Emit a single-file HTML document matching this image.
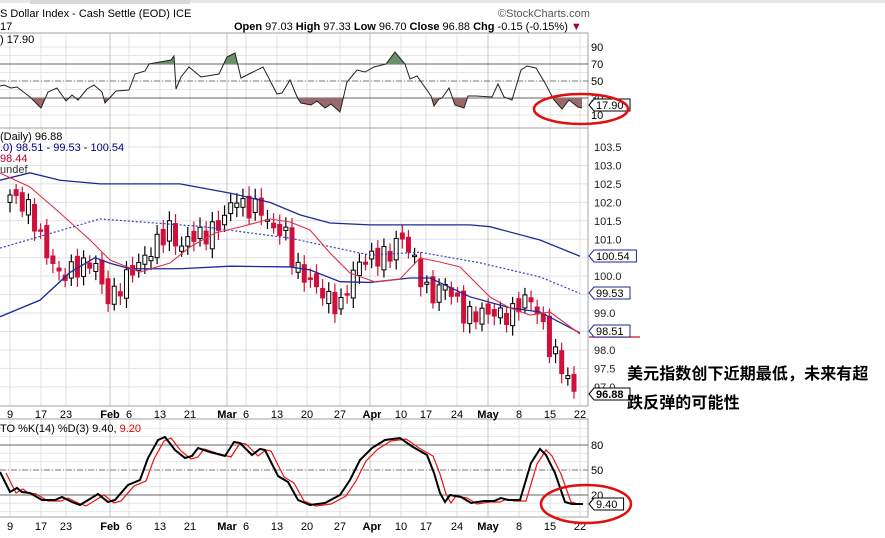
<!DOCTYPE html>
<html><head><meta charset="utf-8"><style>
body{margin:0;background:#fff;width:885px;height:538px;overflow:hidden;font-family:"Liberation Sans",sans-serif}
svg text{font-family:"Liberation Sans",sans-serif;font-size:11px}
.cn{position:absolute;left:627px;font:bold 16px "Liberation Sans","Noto Sans CJK SC",sans-serif;color:#000;letter-spacing:0.1px}
</style></head><body>
<svg id="s" width="885" height="538" xmlns="http://www.w3.org/2000/svg" style="position:absolute;left:0;top:0">
<rect x="0" y="0" width="885" height="3" fill="#e8e8e8"/>
<rect x="30" y="0" width="160" height="4" fill="#d8d8d8"/>
<g id="grid"></g>
<text x="0" y="17" font-size="12">S Dollar Index - Cash Settle (EOD) ICE</text>
<text x="498" y="17" fill="#555" font-size="12">©StockCharts.com</text>
<text x="0" y="30" font-size="11">17</text>
<text x="234" y="30" font-size="11"><tspan font-weight="bold">Open</tspan> 97.03 <tspan font-weight="bold">High</tspan> 97.33 <tspan font-weight="bold">Low</tspan> 96.70 <tspan font-weight="bold">Close</tspan> 96.88 <tspan font-weight="bold">Chg</tspan> -0.15 (-0.15%) <tspan fill="#a00040">▼</tspan></text>
<text x="0" y="43">) 17.90</text>
<text x="0" y="140">(Daily) 96.88</text>
<text x="0" y="151" fill="#000080">.0) 98.51 - 99.53 - 100.54</text>
<text x="0" y="162" fill="#c00030">98.44</text>
<text x="0" y="173" fill="#333">undef</text>
<text x="0" y="432">TO %K(14) %D(3) 9.40, <tspan fill="#e00000">9.20</tspan></text>
<g id="dyn"></g>
</svg>
<div class="cn" style="top:360px">美元指数创下近期最低，未来有超</div>
<div class="cn" style="top:389px">跌反弹的可能性</div>
<script>
var NS="http://www.w3.org/2000/svg",G=document.getElementById('grid'),D=document.getElementById('dyn');
function el(p,t,a,txt){var e=document.createElementNS(NS,t);for(var k in a)e.setAttribute(k,a[k]);if(txt!=null)e.textContent=txt;p.appendChild(e);return e}
var R=588;
var panels=[[33,128],[128,406],[419,517]];
function yp(p){return 147+(103.5-p)*36.9}
for(var p=103.5;p>=96.9;p-=0.5){var y=yp(p);if(y<128||y>406)continue;el(G,'line',{x1:0,x2:R,y1:y,y2:y,stroke:'#e2e2e2'});el(G,'text',{x:594,y:y+4,fill:'#222'},p.toFixed(1))}
for(var v=10;v<=90;v+=10){var y=64+(70-v)*0.85;el(G,'line',{x1:0,x2:R,y1:y,y2:y,stroke:'#e6e6e6'})}
for(var v=0;v<=100;v+=10){var y=445+(80-v)*0.833;if(y>419&&y<517)el(G,'line',{x1:0,x2:R,y1:y,y2:y,stroke:'#e6e6e6'})}
var minor=[10,41,66,129,160,190,246,277,307,340,401,426,457,519,550,580],major=[110,227,370,488];
minor.forEach(function(x){panels.forEach(function(pp){el(G,'line',{x1:x,x2:x,y1:pp[0],y2:pp[1],stroke:'#e0e0e0'})})});
major.forEach(function(x){panels.forEach(function(pp){el(G,'line',{x1:x,x2:x,y1:pp[0],y2:pp[1],stroke:'#c4c4c4'})})});
panels.forEach(function(pp){el(G,'rect',{x:-1,y:pp[0],width:R+1,height:pp[1]-pp[0],fill:'none',stroke:'#a0a0a0'})});
[[70,'#666',''],[50,'#777','6,2,1,2'],[30,'#666','']].forEach(function(a){var y=64+(70-a[0])*0.85;el(G,'line',{x1:0,x2:R,y1:y,y2:y,stroke:a[1],'stroke-dasharray':a[2]})});
[90,70,50,30,10].forEach(function(v){el(G,'text',{x:591,y:64+(70-v)*0.85+4},v)});
[[80,'#666',''],[50,'#777','6,2,1,2'],[20,'#666','']].forEach(function(a){var y=445+(80-a[0])*0.833;el(G,'line',{x1:0,x2:R,y1:y,y2:y,stroke:a[1],'stroke-dasharray':a[2]})});
[80,50,20].forEach(function(v){el(G,'text',{x:591,y:445+(80-v)*0.833+4},v)});
var lab=[[10,'9'],[41,'17'],[66,'23'],[110,'Feb',1],[129,'6'],[160,'13'],[190,'21'],[227,'Mar',1],[246,'6'],[277,'13'],[307,'20'],[340,'27'],[372,'Apr',1],[401,'10'],[426,'17'],[457,'24'],[488,'May',1],[519,'8'],[550,'15'],[580,'22']];
[414,526].forEach(function(y){lab.forEach(function(l){el(G,'text',{x:l[0],y:y+4,'text-anchor':'middle','font-weight':l[2]?'bold':'normal','font-size':'12'},l[1])})});
var rsi=[[0,86],[4,85],[11,88],[17,87],[30,97],[41,108],[48,92],[57,88],[66,101],[72,95],[78,100],[87,89],[94,85],[102,92],[105,103],[116,91],[129,90],[135,74],[145,71],[149,64],[171,60],[174,56],[176,89],[181,77],[189,67],[201,77],[219,74],[227,57],[235,53],[241,78],[253,72],[263,67],[277,94],[282,93],[290,80],[298,99],[301,103],[311,105],[317,101],[325,108],[331,104],[340,112],[347,82],[357,70],[365,72],[374,67],[386,64],[395,52],[405,64],[410,79],[417,76],[431,96],[434,106],[439,99],[442,98],[449,88],[455,105],[464,108],[468,96],[476,96],[492,97],[498,84],[504,97],[512,100],[521,70],[527,66],[536,68],[545,83],[554,100],[562,109],[569,100],[578,107],[582,108]];
var pts=rsi.map(function(p){return p.join(',')}).join(' ');
el(D,'clipPath',{id:'ca'});el(D.lastChild,'rect',{x:0,y:0,width:R,height:64});
el(D,'clipPath',{id:'cb'});el(D.lastChild,'rect',{x:0,y:98,width:R,height:40});
el(D,'polygon',{points:'0,64 '+pts+' 582,64',fill:'#6b8f6b','clip-path':'url(#ca)'});
el(D,'polygon',{points:'0,98 '+pts+' 582,98',fill:'#9a6a6a','clip-path':'url(#cb)'});
el(D,'polyline',{points:pts,fill:'none',stroke:'#222','stroke-width':1});
var wp=[[10,102.2],[30,101.8],[45,100.7],[60,100.0],[75,100.2],[95,100.4],[105,99.4],[115,99.5],[130,100.1],[145,100.5],[160,101.0],[170,101.3],[180,100.7],[190,101.1],[205,101.1],[215,101.3],[225,101.6],[235,102.2],[245,101.8],[260,101.9],[270,101.3],[285,101.2],[295,100.2],[305,100.0],[320,99.6],[340,99.1],[350,99.9],[360,100.4],[375,100.5],[390,100.6],[400,101.1],[410,100.7],[420,100.0],[430,99.4],[445,99.8],[455,99.4],[465,98.9],[480,99.0],[495,99.0],[510,98.9],[520,99.3],[530,99.4],[540,98.9],[550,98.0],[560,97.7],[570,97.0],[580,96.88]];
function interp(a,x){for(var i=0;i<a.length-1;i++){if(x<=a[i+1][0]){var t=(x-a[i][0])/(a[i+1][0]-a[i][0]);return a[i][1]+t*(a[i+1][1]-a[i][1])}}return a[a.length-1][1]}
var prev=102.0;
for(var i=0;i<93;i++){var x=10+i*6.13;var c=interp(wp,x)+0.25*Math.sin(i*2.7);if(i==92)c=96.88;var o=prev+0.15*Math.sin(i*1.3);var hi=Math.max(o,c)+0.15+0.12*Math.abs(Math.sin(i*3.1)),lo=Math.min(o,c)-0.15-0.12*Math.abs(Math.cos(i*2.3));
var red=c<o,col=red?'#d0103a':'#000';
el(D,'line',{x1:x,x2:x,y1:yp(hi),y2:yp(lo),stroke:col,'stroke-width':1.2});
var yt=yp(Math.max(o,c)),h=Math.max(1.5,Math.abs(yp(o)-yp(c)));
el(D,'rect',{x:x-2,y:yt,width:4,height:h,fill:red?'#d0103a':'#fff',stroke:red?'#d0103a':'#000','stroke-width':1});prev=c}
function line(a,conv,att){att.points=a.map(function(p){return p[0]+','+conv(p[1])}).join(' ');att.fill='none';el(D,'polyline',att)}
var id=function(v){return v};
line([[0,102.6],[30,102.8],[60,102.6],[100,102.5],[180,102.5],[230,102.25],[270,102.0],[300,101.66],[330,101.44],[370,101.39],[470,101.39],[490,101.34],[540,100.98],[580,100.54]],yp,{stroke:'#1a2a9a','stroke-width':1.3});
line([[0,100.76],[100,101.55],[200,101.35],[290,101.03],[370,100.57],[420,100.65],[480,100.36],[540,99.98],[580,99.53]],yp,{stroke:'#3344bb','stroke-width':1.2,'stroke-dasharray':'2,2'});
line([[0,98.9],[40,99.35],[70,100.1],[95,100.5],[110,100.35],[130,100.2],[180,100.2],[230,100.27],[290,100.25],[310,100.17],[340,99.85],[370,99.83],[410,99.95],[430,99.95],[470,99.44],[510,99.14],[540,99.03],[580,98.46]],yp,{stroke:'#1a2a9a','stroke-width':1.3});
line([[0,173],[30,187],[60,213],[90,240],[110,260],[140,272],[170,263],[190,247],[215,233],[240,227],[270,219],[290,222],[310,230],[330,253],[350,273],[375,282],[400,279],[420,258],[440,262],[460,267],[490,297],[510,308],[530,315],[550,312],[580,334]],id,{stroke:'#e0304a','stroke-width':1.1});
var k=[[0,472],[10,492],[17,488],[22,492],[30,493],[42,500],[55,500],[62,497],[72,502],[80,505],[98,494],[108,502],[115,500],[128,485],[140,480],[148,458],[158,440],[165,437],[175,450],[185,458],[192,456],[198,448],[210,452],[225,456],[234,442],[240,443],[252,455],[260,449],[265,450],[278,476],[288,482],[298,500],[310,505],[325,503],[340,495],[350,480],[360,460],[372,448],[385,440],[400,438],[413,447],[427,455],[434,473],[440,493],[445,502],[450,495],[461,497],[471,503],[484,501],[494,501],[501,498],[508,500],[520,500],[531,463],[540,449],[546,455],[555,473],[565,502],[572,504],[583,504]];
line(k.map(function(p){return [Math.min(583,p[0]+6),p[1]+(p[0]>560?0:1)]}),id,{stroke:'#ee1111','stroke-width':1.2});
line(k,id,{stroke:'#000','stroke-width':2});
function tag(y,t,st,bold,fill){el(D,'path',{d:'M589,'+y+' l5,-6 h'+(t.length*6.4+4)+' v12 h-'+(t.length*6.4+4)+' z',fill:fill||'#fff',stroke:st});el(D,'text',{x:596,y:y+4,'font-weight':bold?'bold':'normal',fill:'#000'},t)}
tag(105,'17.90','#000');tag(256,'100.54','#1a2a9a');tag(293,'99.53','#1a2a9a');
el(D,'line',{x1:589,x2:640,y1:337,y2:337,stroke:'#e0304a','stroke-width':1.5});tag(331,'98.51','#1a2a9a');
tag(394,'96.88','#000',1);tag(504,'9.40','#000');
el(D,'ellipse',{cx:581,cy:109,rx:47,ry:15,fill:'none',stroke:'#e01010','stroke-width':2.5});
el(D,'ellipse',{cx:586,cy:504,rx:45,ry:19,fill:'none',stroke:'#e01010','stroke-width':2.5});
</script>
</body></html>
